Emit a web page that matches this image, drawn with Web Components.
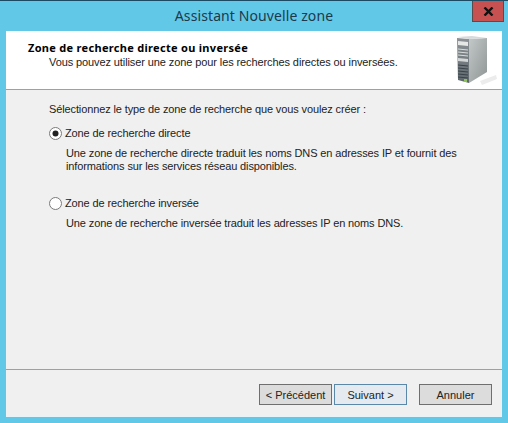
<!DOCTYPE html>
<html>
<head>
<meta charset="utf-8">
<title>Assistant Nouvelle zone</title>
<style>
  html, body { margin: 0; padding: 0; }
  body { width: 508px; height: 423px; overflow: hidden; font-family: "Liberation Sans", Arial, sans-serif; }
</style>
</head>
<body>
<wizard-window titre="Assistant Nouvelle zone">
  <wizard-header titre="Zone de recherche directe ou inversée" sous-titre="Vous pouvez utiliser une zone pour les recherches directes ou inversées."></wizard-header>
  <wizard-body>
    <p slot="intro">Sélectionnez le type de zone de recherche que vous voulez créer :</p>
    <radio-option label="Zone de recherche directe" checked>Une zone de recherche directe traduit les noms DNS en adresses IP et fournit des<br>informations sur les services réseau disponibles.</radio-option>
    <radio-option label="Zone de recherche inversée">Une zone de recherche inversée traduit les adresses IP en noms DNS.</radio-option>
  </wizard-body>
  <wizard-footer>
    <wizard-button>&lt; Précédent</wizard-button>
    <wizard-button focus>Suivant &gt;</wizard-button>
    <wizard-button cancel>Annuler</wizard-button>
  </wizard-footer>
</wizard-window>

<script>
class WizardWindow extends HTMLElement {
  constructor() {
    super();
    this.attachShadow({ mode: 'open' });
  }
  connectedCallback() {
    this.shadowRoot.innerHTML = `
      <style>
        :host {
          display: flex;
          flex-direction: column;
          width: 508px;
          height: 423px;
          box-sizing: border-box;
          background: #62c8e8;
          border-top: 1px solid #1d4a63;
        }
        .titlebar {
          height: 30px;
          flex: none;
          display: flex;
          justify-content: center;
          position: relative;
          font-family: "Noto Sans", sans-serif;
          font-size: 14px;
          letter-spacing: .1px;
          line-height: 30px;
          color: #1c3a4c;
        }
        .close {
          position: absolute;
          top: 0;
          right: 4px;
          width: 32px;
          height: 21px;
          box-sizing: border-box;
          background: #c75050;
          border: 1px solid #5b4a4a;
          border-top: 0;
          display: flex;
          align-items: center;
          justify-content: center;
        }
        .content {
          flex: 1;
          margin: 0 6px 6px;
          display: flex;
          flex-direction: column;
          background: #f0f0f0;
          border-bottom: 1px solid #e6f3f8;
        }
      </style>
      <div class="titlebar">
        <span>${this.getAttribute('titre')}</span>
        <div class="close">
          <svg width="11" height="9" viewBox="0 0 11 9">
            <path d="M1.5 .5 L9.5 8.5 M9.5 .5 L1.5 8.5" stroke="#111" stroke-width="2.4" fill="none"/>
          </svg>
        </div>
      </div>
      <div class="content"><slot></slot></div>
    `;
  }
}

class WizardHeader extends HTMLElement {
  constructor() {
    super();
    this.attachShadow({ mode: 'open' });
  }
  connectedCallback() {
    this.shadowRoot.innerHTML = `
      <style>
        :host {
          display: flex;
          flex: none;
          height: 59px;
          box-sizing: border-box;
          background: #fff;
          border-bottom: 1px solid #a0a0a0;
          padding: 9px 0 0 22px;
          position: relative;
          color: #000;
        }
        .txt b { display: block; font-size: 11px; line-height: 15px; font-weight: 700; letter-spacing: .3px; font-family: "Noto Sans", sans-serif; }
        .txt span { display: block; font-size: 11px; line-height: 15px; letter-spacing: -.1px; padding-left: 21px; color: #222; }
        svg { position: absolute; right: 2px; top: 4px; }
      </style>
      <div class="txt">
        <b>${this.getAttribute('titre')}</b>
        <span>${this.getAttribute('sous-titre')}</span>
      </div>
      <svg width="46" height="50" viewBox="0 0 46 50">
        <defs>
          <linearGradient id="face" x1="0" x2="1" y1="0" y2="1">
            <stop offset="0" stop-color="#c3c8c9"/>
            <stop offset="1" stop-color="#8e9594"/>
          </linearGradient>
          <linearGradient id="front" x1="0" x2="0" y1="0" y2="1">
            <stop offset="0" stop-color="#8c9296"/>
            <stop offset="1" stop-color="#5e676c"/>
          </linearGradient>
        </defs>
        <path d="M26 46 L42 40 L43 44 L28 50 Z" fill="#ececec"/>
        <path d="M3 3 L15 4 L15 48 L4 45 Z" fill="url(#front)"/>
        <path d="M15 4 L33 3 L33 37 L15 48 Z" fill="url(#face)"/>
        <path d="M3 2 L18 1 L33 3 L15 4 Z" fill="#d6dadb"/>
        <path d="M4 6 L14 7 L14 11 L4 10 Z" fill="#e6e8e8"/>
        <path d="M4 14 L14 15 M4 17 L14 18 M4 20 L14 21" stroke="#d8dcdd" stroke-width="1"/>
        <path d="M4 23 L14 24 L14 27 L4 26 Z" fill="#d3d7d8"/>
        <path d="M4 30 L14 31 M4 33 L14 34 M4 36 L14 37 M4 39 L14 40 M4 42 L14 43" stroke="#39424a" stroke-width="1"/>
        <rect x="10" y="44" width="3" height="3" fill="#8fc45a"/>
      </svg>
    `;
  }
}

class WizardBody extends HTMLElement {
  constructor() {
    super();
    this.attachShadow({ mode: 'open' });
  }
  connectedCallback() {
    this.shadowRoot.innerHTML = `
      <style>
        :host {
          display: block;
          flex: 1;
          padding: 12px 0 0 43px;
          font-size: 11px;
          letter-spacing: -.12px;
          color: #222;
          border-bottom: 1px solid #a0a0a0;
        }
        ::slotted(p) { margin: 0 0 9px; line-height: 15px; }
      </style>
      <slot name="intro"></slot>
      <slot></slot>
    `;
  }
}

class RadioOption extends HTMLElement {
  constructor() {
    super();
    this.attachShadow({ mode: 'open' });
  }
  connectedCallback() {
    const dot = this.hasAttribute('checked') ? '<circle cx="6.5" cy="6.5" r="3" fill="#222"/>' : '';
    this.shadowRoot.innerHTML = `
      <style>
        :host { display: block; margin-bottom: 23px; }
        .row { display: flex; align-items: center; gap: 3px; line-height: 15px; height: 15px; }
        svg { flex: none; }
        .desc { margin: 6px 0 0 17px; line-height: 13px; }
      </style>
      <div class="row">
        <svg width="13" height="13" viewBox="0 0 13 13">
          <circle cx="6.5" cy="6.5" r="6" fill="#fff" stroke="#7a7a7a"/>
          ${dot}
        </svg>
        <span>${this.getAttribute('label')}</span>
      </div>
      <div class="desc"><slot></slot></div>
    `;
  }
}

class WizardFooter extends HTMLElement {
  constructor() {
    super();
    this.attachShadow({ mode: 'open' });
  }
  connectedCallback() {
    this.shadowRoot.innerHTML = `
      <style>
        :host {
          display: flex;
          flex: none;
          height: 46px;
          box-sizing: border-box;
          padding: 14px 10px 0 0;
          justify-content: flex-end;
          gap: 2px;
        }
      </style>
      <slot></slot>
    `;
  }
}

class WizardButton extends HTMLElement {
  constructor() {
    super();
    this.attachShadow({ mode: 'open' });
  }
  connectedCallback() {
    this.shadowRoot.innerHTML = `
      <style>
        :host {
          display: flex;
          align-items: center;
          justify-content: center;
          width: 73px;
          height: 21px;
          box-sizing: border-box;
          background: #dcdcdc;
          border: 1px solid #6f6f6f;
          font-size: 11px;
          color: #222;
        }
        :host([focus]) { background: #e4eaef; border-color: #5b87a8; }
        :host([cancel]) { margin-left: 10px; }
      </style>
      <slot></slot>
    `;
  }
}

customElements.define('wizard-window', WizardWindow);
customElements.define('wizard-header', WizardHeader);
customElements.define('wizard-body', WizardBody);
customElements.define('radio-option', RadioOption);
customElements.define('wizard-footer', WizardFooter);
customElements.define('wizard-button', WizardButton);
</script>
</body>
</html>
